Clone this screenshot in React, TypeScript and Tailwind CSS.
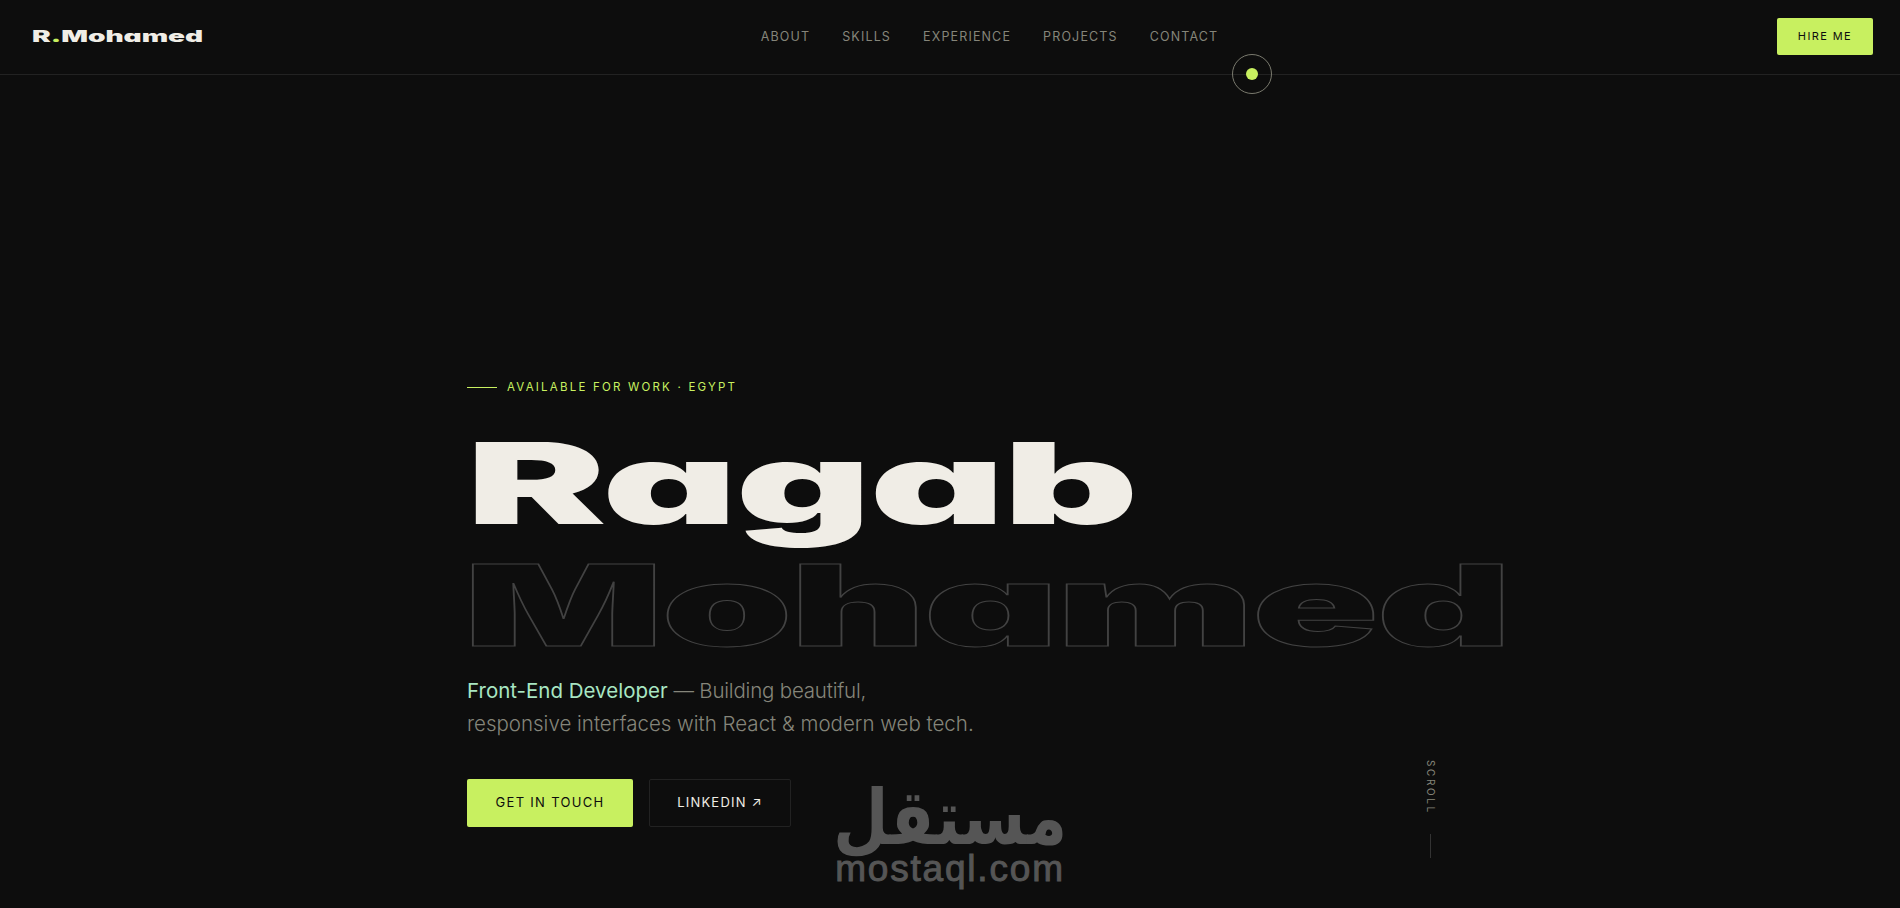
const navLinks = ["ABOUT", "SKILLS", "EXPERIENCE", "PROJECTS", "CONTACT"];

export default function App() {
  return (
    <div className="relative flex h-[908px] flex-col overflow-hidden bg-[#0d0d0d] font-['Inter',sans-serif] text-[#f0ede6]">
      {/* Nav */}
      <header className="relative flex h-[75px] items-center justify-between border-b border-[#222222] pr-[27px] pl-8">
        <a href="#" className="mb-[2px] block w-[170px]">
          <span className="block w-fit origin-left scale-x-[1.75] text-[16px] leading-none font-black [font-feature-settings:'cv11']">
            R<span className="text-[#c8f060]">.</span>Mohamed
          </span>
        </a>
        <nav className="flex gap-[32px] text-[12.5px] tracking-[1.15px] text-[#85857a]">
          {navLinks.map((link) => (
            <a key={link} href="#">{link}</a>
          ))}
        </nav>
        <button className="mb-[2px] h-[37px] w-[96px] rounded-[2px] bg-[#c8f060] text-[11px] font-normal tracking-[1.4px] text-[#0d0d0d]">
          HIRE ME
        </button>
      </header>

      {/* Custom cursor */}
      <div className="absolute top-[54px] left-[1232px] flex h-10 w-10 items-center justify-center rounded-full border border-[#7a7a6e]">
        <div className="h-3 w-3 rounded-full bg-[#c8f060]" />
      </div>

      {/* Hero */}
      <main className="relative mx-auto flex w-[966px] flex-1 flex-col justify-end pb-[81px]">
        <div className="mb-[26px] flex items-center gap-[10px] text-[11.5px] font-normal tracking-[2.2px] text-[#c8f060]">
          <span className="h-px w-[30px] bg-[#c8f060]" />
          AVAILABLE FOR WORK · EGYPT
        </div>

        <h1 className="text-[113px] leading-[122px] font-black tracking-[-1.2px] [font-feature-settings:'cv11']">
          <span className="-ml-px block origin-left scale-x-[1.86]">Ragab</span>
          <span className="-ml-[4px] block origin-left scale-x-[1.86] tracking-[-1.5px] text-transparent [-webkit-text-stroke:1px_#424242]">Mohamed</span>
        </h1>

        <p className="mt-[8px] text-[20.5px] leading-[33px] font-light text-[#85857a]">
          <span className="font-normal text-[#a8e6c3]">Front-End Developer</span>{" "}
          <span className="tracking-[-0.2px]">— Building beautiful,</span>
          <br />
          responsive interfaces with React &amp; modern web tech.
        </p>

        <div className="mt-[39px] flex gap-4">
          <a href="#" className="flex h-12 w-[166px] items-center justify-center rounded-[2px] bg-[#c8f060] text-[13px] font-normal tracking-[1.3px] text-[#0d0d0d]">
            GET IN TOUCH
          </a>
          <a href="#" className="flex h-12 w-[142px] items-center justify-center rounded-[2px] border border-[#222222] text-[13px] font-normal tracking-[1.2px]">
            LINKEDIN ↗
          </a>
        </div>

        <div className="absolute right-[-5px] bottom-[50px] flex flex-col items-center gap-[19px]">
          <span className="text-[10px] tracking-[2.6px] text-[#85857a] [writing-mode:vertical-rl]">SCROLL</span>
          <span className="h-[24px] w-px bg-[#333333]" />
        </div>
      </main>

      {/* Watermark */}
      <div className="absolute top-[786px] left-[835px] flex w-[230px] flex-col items-center text-[#555555]">
        <span dir="rtl" className="origin-bottom scale-y-[1.2] font-['DejaVu_Sans',sans-serif] text-[64px] leading-[78px] font-bold">مستقل</span>
        <span className="-mt-[14px] font-['Liberation_Sans',sans-serif] text-[37px] leading-[38px] tracking-[1.8px] whitespace-nowrap [-webkit-text-stroke:1px_#555555]">mostaql.com</span>
      </div>
    </div>
  );
}
